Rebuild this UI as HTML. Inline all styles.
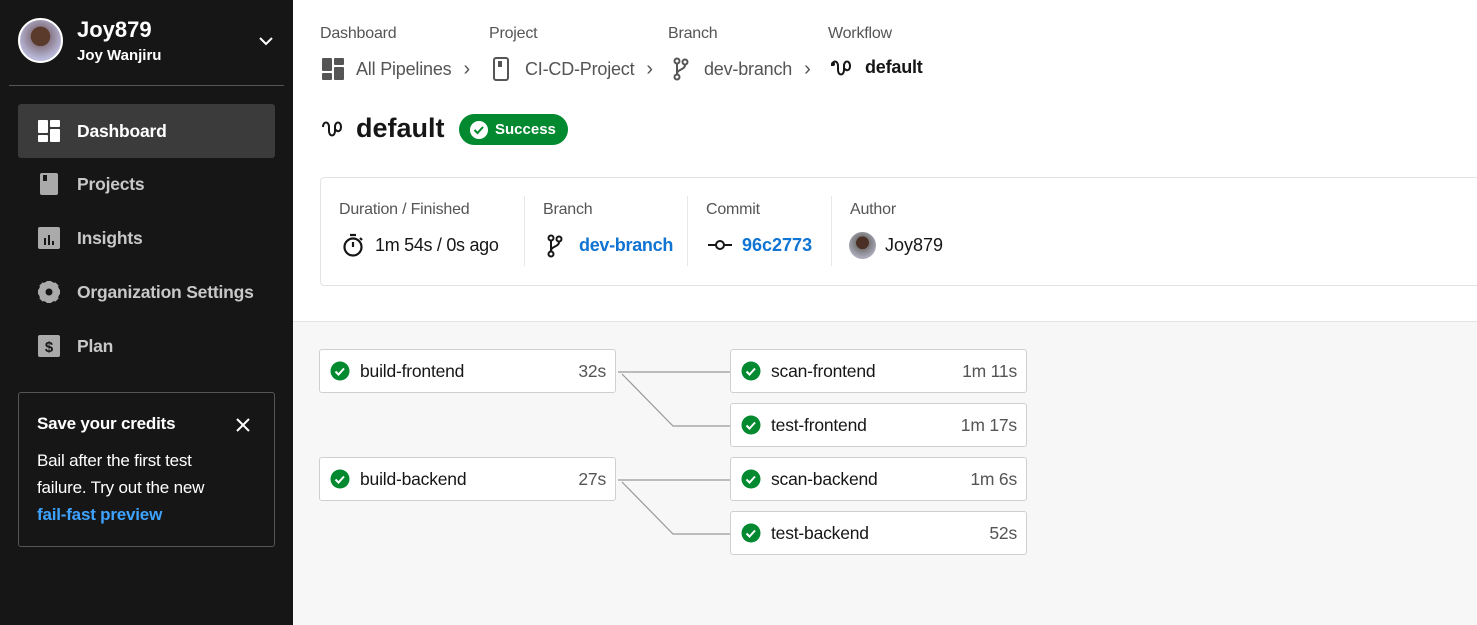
<!DOCTYPE html>
<html><head><meta charset="utf-8"><style>
*{box-sizing:border-box;margin:0;padding:0}
body{width:1477px;height:625px;overflow:hidden;font-family:"Liberation Sans",Roboto,sans-serif;background:#f7f7f7;position:relative}
.sb{position:absolute;left:0;top:0;width:293px;height:625px;background:#161616;color:#fff}
.main{position:absolute;left:293px;top:0;right:0;height:322px;background:#fff;border-bottom:1px solid #e3e3e3}
.abs{position:absolute}
.nav{position:absolute;left:18px;width:257px;height:54px;display:flex;align-items:center;font-weight:bold;font-size:17.5px;color:#c8c8c8;letter-spacing:-0.2px}
.nav svg{margin:0 16px 0 19px}
.job{position:absolute;width:297px;height:44px;background:#fff;border:1px solid #cfcfcf;border-radius:3px;display:flex;align-items:center;font-size:17.5px;color:#161616;letter-spacing:-0.2px}
.job svg{margin:0 10px 0 10px}
.job .t{margin-left:auto;margin-right:9px;color:#555}
.lbl{font-size:16px;color:#555;position:absolute;letter-spacing:-0.2px}
.bc{position:absolute;top:57px;font-size:18px;color:#555;display:flex;align-items:center;letter-spacing:-0.2px}
</style></head><body>
<div class="sb">
  <div class="abs" style="left:18px;top:18px;width:45px;height:45px;border-radius:50%;border:2px solid #fff;background:radial-gradient(circle at 50% 40%,#5a3a2a 0 30%,#8a7a8a 31%,#b8b8d8 70%)"></div>
  <div class="abs" style="left:77px;top:17px;font-size:22px;font-weight:bold">Joy879</div>
  <div class="abs" style="left:77px;top:47px;font-size:15px;font-weight:bold">Joy Wanjiru</div>
  <svg class="abs" style="left:258px;top:36px" width="16" height="10"><path d="M2 2l6 6 6-6" stroke="#fff" stroke-width="2" fill="none"/></svg>
  <div class="abs" style="left:9px;top:85px;width:275px;height:1px;background:#555"></div>
  <div class="nav" style="top:104px;background:#3b3b3b;border-radius:3px;color:#fff"><svg width="24" height="24"><rect x="1" y="1" width="10" height="13" rx="1" fill="#fff"/><rect x="13" y="1" width="10" height="7" rx="1" fill="#fff"/><rect x="1" y="16" width="10" height="7" rx="1" fill="#fff"/><rect x="13" y="10" width="10" height="13" rx="1" fill="#fff"/></svg>Dashboard</div>
  <div class="nav" style="top:157px"><svg width="24" height="24"><rect x="3" y="1" width="18" height="22" rx="2" fill="#aaa"/><rect x="6" y="3" width="4" height="6" fill="#161616"/></svg>Projects</div>
  <div class="nav" style="top:211px"><svg width="24" height="24"><rect x="1" y="1" width="22" height="22" rx="2" fill="#aaa"/><rect x="7" y="12" width="2" height="7" fill="#161616"/><rect x="11" y="9" width="2" height="10" fill="#161616"/><rect x="15" y="15" width="2" height="4" fill="#161616"/></svg>Insights</div>
  <div class="nav" style="top:265px"><svg width="24" height="24"><circle cx="12" cy="12" r="8" fill="none" stroke="#aaa" stroke-width="5"/><path d="M12 1v22M1 12h22M4 4l16 16M20 4L4 20" stroke="#aaa" stroke-width="5"/><circle cx="12" cy="12" r="3.5" fill="#161616"/></svg>Organization Settings</div>
  <div class="nav" style="top:319px"><svg width="24" height="24"><rect x="1" y="1" width="22" height="22" rx="2" fill="#aaa"/><text x="12" y="18" font-size="15" font-weight="bold" text-anchor="middle" fill="#161616" font-family="Liberation Sans">$</text></svg>Plan</div>
  <div class="abs" style="left:18px;top:392px;width:257px;height:155px;border:1px solid #555;border-radius:3px;padding:20px 18px;font-size:17px;line-height:27px;letter-spacing:-0.2px">
    <div style="font-weight:bold;line-height:22px;margin-bottom:12px">Save your credits</div>
    <div>Bail after the first test<br>failure. Try out the new<br><span style="color:#3ea2ff;font-weight:bold">fail-fast preview</span></div>
    <svg class="abs" style="left:216px;top:24px" width="16" height="16"><path d="M2 2l12 12M14 2L2 14" stroke="#fff" stroke-width="2"/></svg>
  </div>
</div>
<div class="main">
  <div class="lbl" style="left:27px;top:25px">Dashboard</div>
  <div class="lbl" style="left:196px;top:25px">Project</div>
  <div class="lbl" style="left:375px;top:25px">Branch</div>
  <div class="lbl" style="left:535px;top:25px">Workflow</div>
  <div class="bc" style="left:28px"><svg width="24" height="24" style="margin-right:11px"><rect x="1" y="1" width="10" height="13" rx="1" fill="#555"/><rect x="13" y="1" width="10" height="7" rx="1" fill="#555"/><rect x="1" y="16" width="10" height="7" rx="1" fill="#555"/><rect x="13" y="10" width="10" height="13" rx="1" fill="#555"/></svg>All Pipelines<span style="margin-left:12px;font-size:20px">›</span></div>
  <div class="bc" style="left:200px"><svg width="16" height="24" style="margin-right:16px"><rect x="1" y="1" width="14" height="22" rx="2" fill="none" stroke="#555" stroke-width="2"/><rect x="5" y="4" width="4" height="6" fill="#555"/></svg>CI-CD-Project<span style="margin-left:12px;font-size:20px">›</span></div>
  <div class="bc" style="left:380px"><svg width="16" height="24" style="margin-right:15px"><circle cx="4" cy="4" r="2.5" fill="none" stroke="#555" stroke-width="2"/><circle cx="12" cy="5" r="2.5" fill="none" stroke="#555" stroke-width="2"/><circle cx="4" cy="20" r="2.5" fill="none" stroke="#555" stroke-width="2"/><path d="M4 7v10M12 8c0 5-8 4-8 9" stroke="#555" stroke-width="2" fill="none"/></svg>dev-branch<span style="margin-left:12px;font-size:20px">›</span></div>
  <div class="bc" style="left:537px;color:#161616;font-weight:bold"><svg width="24" height="20" style="margin-right:11px"><path d="M2 8c0-6 6-6 6 0v4c0 6 6 6 6 0s0-6 0-4c0-6 6-6 6 0c0 4-3 6-6 2" stroke="#161616" stroke-width="2" fill="none"/><circle cx="3" cy="6" r="2" fill="#161616"/></svg>default</div>
  <svg class="abs" style="left:28px;top:119px" width="24" height="20"><path d="M2 8c0-6 6-6 6 0v4c0 6 6 6 6 0s0-6 0-4c0-6 6-6 6 0c0 4-3 6-6 2" stroke="#161616" stroke-width="2" fill="none"/></svg>
  <div class="abs" style="left:63px;top:113px;font-size:27px;font-weight:bold;color:#161616">default</div>
  <div class="abs" style="left:166px;top:114px;width:109px;height:31px;border-radius:16px;background:#03892f;color:#fff;font-size:15px;font-weight:bold;display:flex;align-items:center"><svg width="20" height="20" style="margin:0 6px 0 10px"><circle cx="10" cy="10" r="9" fill="#fff"/><path d="M5.5 10l3 3 5.5-6" stroke="#03892f" stroke-width="2" fill="none"/></svg>Success</div>
  <div class="abs" style="left:27px;top:177px;width:1200px;height:109px;border:1px solid #e3e3e3;border-radius:4px">
    <div class="lbl" style="left:18px;top:23px">Duration / Finished</div>
    <div class="abs" style="left:203px;top:18px;width:1px;height:70px;background:#e8e8e8"></div>
    <div class="lbl" style="left:222px;top:23px">Branch</div>
    <div class="abs" style="left:366px;top:18px;width:1px;height:70px;background:#e8e8e8"></div>
    <div class="lbl" style="left:385px;top:23px">Commit</div>
    <div class="abs" style="left:510px;top:18px;width:1px;height:70px;background:#e8e8e8"></div>
    <div class="lbl" style="left:529px;top:23px">Author</div>
    <svg class="abs" style="left:21px;top:55px" width="22" height="24"><circle cx="11" cy="14" r="8.5" fill="none" stroke="#161616" stroke-width="2.2"/><path d="M8 2h6M11 14V9M18 5l2 2" stroke="#161616" stroke-width="2.2"/></svg>
    <div class="abs" style="left:54px;top:57px;font-size:18px;color:#161616;letter-spacing:-0.3px">1m 54s / 0s ago</div>
    <svg class="abs" style="left:226px;top:56px" width="16" height="24"><circle cx="4" cy="4" r="2.5" fill="none" stroke="#161616" stroke-width="2"/><circle cx="12" cy="5" r="2.5" fill="none" stroke="#161616" stroke-width="2"/><circle cx="4" cy="20" r="2.5" fill="none" stroke="#161616" stroke-width="2"/><path d="M4 7v10M12 8c0 5-8 4-8 9" stroke="#161616" stroke-width="2" fill="none"/></svg>
    <div class="abs" style="left:258px;top:57px;font-size:18px;color:#0f74d2;font-weight:bold;letter-spacing:-0.3px">dev-branch</div>
    <svg class="abs" style="left:387px;top:60px" width="24" height="14"><path d="M0 7h24" stroke="#161616" stroke-width="2"/><circle cx="12" cy="7" r="4" fill="#fff" stroke="#161616" stroke-width="2"/></svg>
    <div class="abs" style="left:421px;top:57px;font-size:18px;color:#0f74d2;font-weight:bold">96c2773</div>
    <div class="abs" style="left:528px;top:54px;width:27px;height:27px;border-radius:50%;background:radial-gradient(circle at 50% 40%,#4a3024 0 30%,#777 31%,#aab 70%)"></div>
    <div class="abs" style="left:564px;top:57px;font-size:18px;color:#161616">Joy879</div>
  </div>
</div>
<svg class="abs" style="left:0;top:0" width="1477" height="625">
  <path d="M618 372H730M622 374L673 426H730M618 480H730M622 482L673 534H730" stroke="#999" stroke-width="1.2" fill="none"/>
</svg>
<div class="job" style="left:319px;top:349px"><svg width="20" height="20"><circle cx="10" cy="10" r="9.5" fill="#03892f"/><path d="M5.5 10.5l3 3 5.5-6" stroke="#fff" stroke-width="2" fill="none"/></svg>build-frontend<span class="t">32s</span></div>
<div class="job" style="left:319px;top:457px"><svg width="20" height="20"><circle cx="10" cy="10" r="9.5" fill="#03892f"/><path d="M5.5 10.5l3 3 5.5-6" stroke="#fff" stroke-width="2" fill="none"/></svg>build-backend<span class="t">27s</span></div>
<div class="job" style="left:730px;top:349px"><svg width="20" height="20"><circle cx="10" cy="10" r="9.5" fill="#03892f"/><path d="M5.5 10.5l3 3 5.5-6" stroke="#fff" stroke-width="2" fill="none"/></svg>scan-frontend<span class="t">1m 11s</span></div>
<div class="job" style="left:730px;top:403px"><svg width="20" height="20"><circle cx="10" cy="10" r="9.5" fill="#03892f"/><path d="M5.5 10.5l3 3 5.5-6" stroke="#fff" stroke-width="2" fill="none"/></svg>test-frontend<span class="t">1m 17s</span></div>
<div class="job" style="left:730px;top:457px"><svg width="20" height="20"><circle cx="10" cy="10" r="9.5" fill="#03892f"/><path d="M5.5 10.5l3 3 5.5-6" stroke="#fff" stroke-width="2" fill="none"/></svg>scan-backend<span class="t">1m 6s</span></div>
<div class="job" style="left:730px;top:511px"><svg width="20" height="20"><circle cx="10" cy="10" r="9.5" fill="#03892f"/><path d="M5.5 10.5l3 3 5.5-6" stroke="#fff" stroke-width="2" fill="none"/></svg>test-backend<span class="t">52s</span></div>
</body></html>
